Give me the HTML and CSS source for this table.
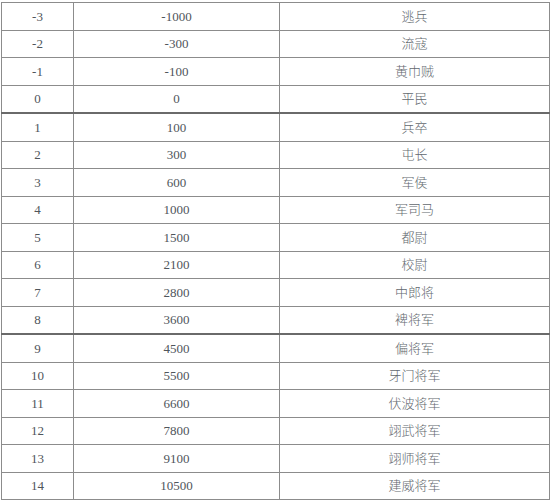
FILE: index.html
```html
<!DOCTYPE html>
<html lang="zh">
<head>
<meta charset="utf-8">
<link rel="stylesheet" href="styles.css">
</head>
<body>
<table class="rank-table">
  <colgroup>
    <col class="c-level">
    <col class="c-points">
    <col class="c-title">
  </colgroup>
  <tbody>
    <tr><td>-3</td><td>-1000</td><td class="title">逃兵</td></tr>
    <tr><td>-2</td><td>-300</td><td class="title">流寇</td></tr>
    <tr><td>-1</td><td>-100</td><td class="title">黄巾贼</td></tr>
    <tr class="sep"><td>0</td><td>0</td><td class="title">平民</td></tr>
    <tr><td>1</td><td>100</td><td class="title">兵卒</td></tr>
    <tr><td>2</td><td>300</td><td class="title">屯长</td></tr>
    <tr><td>3</td><td>600</td><td class="title">军侯</td></tr>
    <tr><td>4</td><td>1000</td><td class="title">军司马</td></tr>
    <tr><td>5</td><td>1500</td><td class="title">都尉</td></tr>
    <tr><td>6</td><td>2100</td><td class="title">校尉</td></tr>
    <tr><td>7</td><td>2800</td><td class="title">中郎将</td></tr>
    <tr class="sep"><td>8</td><td>3600</td><td class="title">裨将军</td></tr>
    <tr><td>9</td><td>4500</td><td class="title">偏将军</td></tr>
    <tr><td>10</td><td>5500</td><td class="title">牙门将军</td></tr>
    <tr><td>11</td><td>6600</td><td class="title">伏波将军</td></tr>
    <tr><td>12</td><td>7800</td><td class="title">翊武将军</td></tr>
    <tr><td>13</td><td>9100</td><td class="title">翊师将军</td></tr>
    <tr><td>14</td><td>10500</td><td class="title">建威将军</td></tr>
  </tbody>
</table>
</body>
</html>
```
FILE: styles.css
```css
html, body {
  margin: 0;
  padding: 0;
  background: #ffffff;
}

body {
  padding: 2px 0 0 1px;
  font-family: "Liberation Serif", "Noto Sans CJK SC", serif;
  font-size: 13px;
  color: #4f555b;
}

.rank-table {
  border-collapse: collapse;
  width: 548px;
  table-layout: fixed;
}

.c-level { width: 72px; }
.c-points { width: 206px; }
.c-title { width: 270px; }

.rank-table td {
  border: 1px solid #8c8c8c;
  height: 26.5px;
  padding: 0;
  text-align: center;
  vertical-align: middle;
  line-height: 15px;
}

.rank-table td.title {
  color: #62686e;
  font-weight: 300;
}

.rank-table tr.sep td {
  border-bottom: 2px solid #6a6a6a;
}
```
